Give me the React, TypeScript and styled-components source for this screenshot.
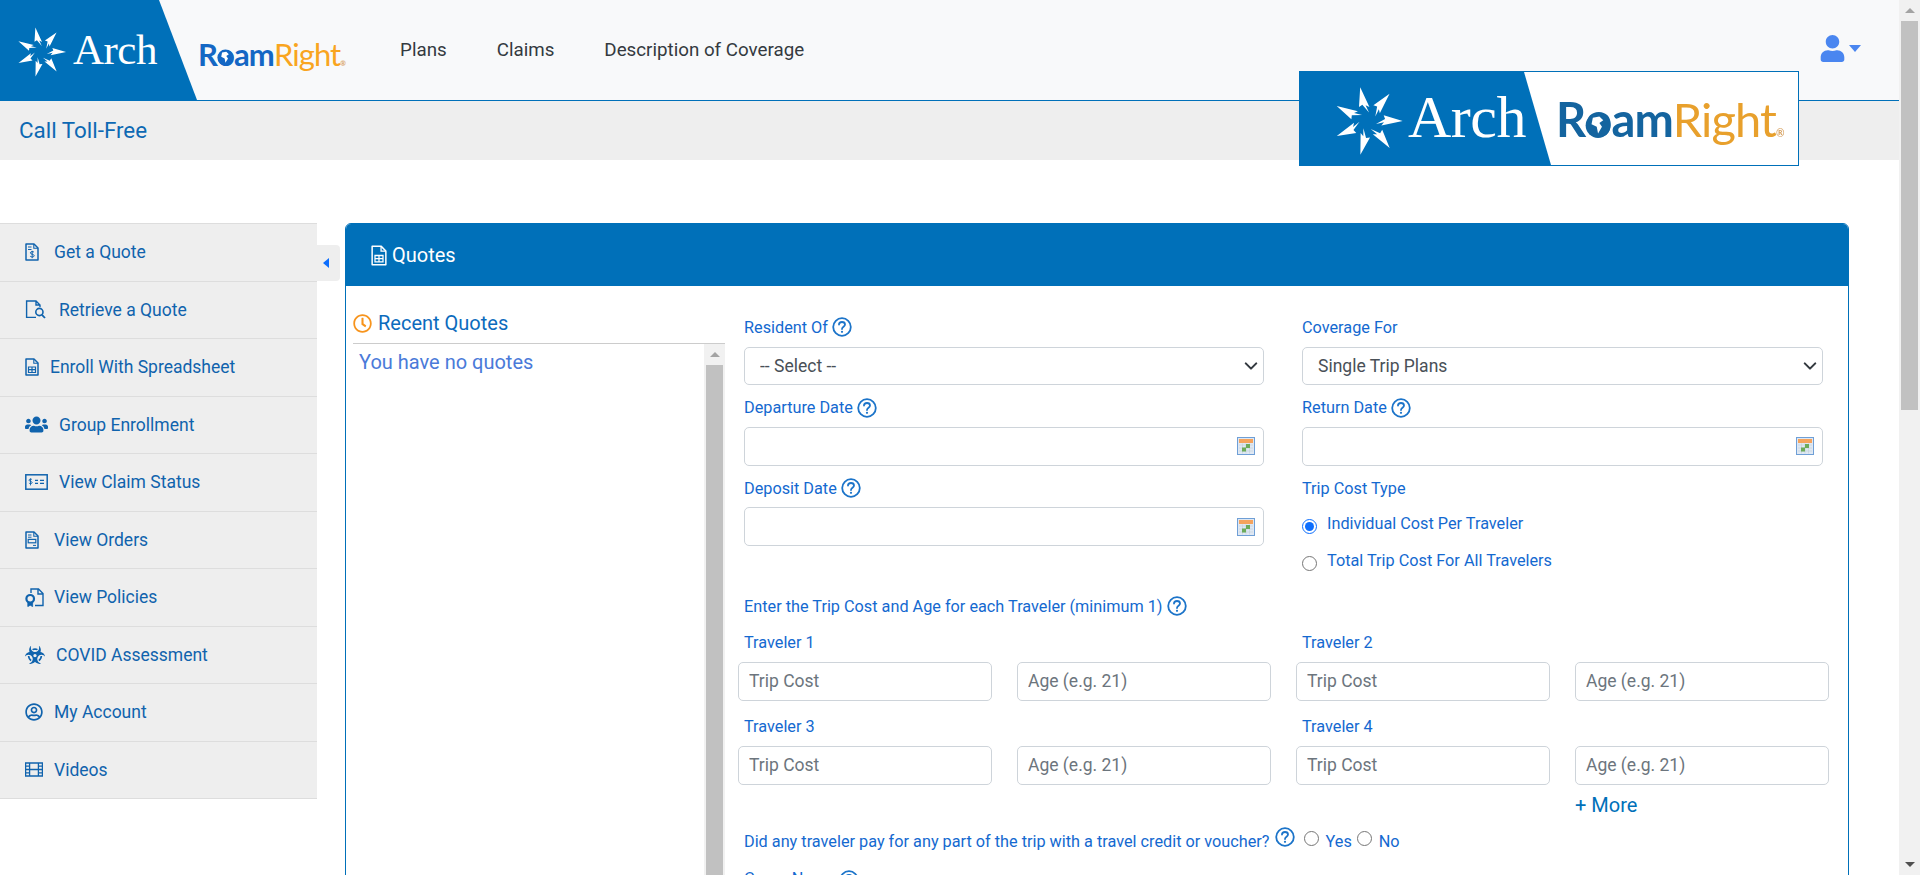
import React from "react";
import styled, { createGlobalStyle } from "styled-components";
import { FaUser, FaUsers, FaBiohazard, FaRegClock, FaRegUserCircle } from "react-icons/fa";

const BLUE = "#0070b9";
const LABEL = "#1469d0";
const SIDE_TEXT = "#1063ad";

const GlobalStyle = createGlobalStyle`
  html, body {
    margin: 0;
    height: 100%;
    overflow: hidden;
    background: #fff;
    font-family: Roboto, "Liberation Sans", sans-serif;
  }
  * {
    box-sizing: border-box;
  }
`;

const Shell = styled.div`
  display: flex;
  height: 875px;
  overflow: hidden;
`;
const Main = styled.div`
  position: relative;
  flex: 1;
  min-width: 0;
  overflow: hidden;
`;

// scrollbars
const Track = styled.div`
  display: flex;
  flex-direction: column;
  align-items: center;
  flex: none;
  width: 21px;
  background: #f1f1f1;
`;
const ArrowCell = styled.div`
  display: flex;
  align-items: center;
  justify-content: center;
  flex: none;
  width: 100%;
  height: 21px;
`;
const EndCell = styled(ArrowCell)`
  margin-top: auto;
`;
const ArrowUp = styled.div`
  width: 0;
  height: 0;
  border-left: 5px solid transparent;
  border-right: 5px solid transparent;
  border-bottom: 5px solid #a3a3a3;
`;
const ArrowDown = styled.div`
  width: 0;
  height: 0;
  border-left: 5px solid transparent;
  border-right: 5px solid transparent;
  border-top: 5px solid #505050;
`;
const Thumb = styled.div<{ $height: number }>`
  flex: none;
  width: 17px;
  height: ${({ $height }) => $height}px;
  background: #c1c1c1;
`;

// top bar
const TopBar = styled.header`
  display: flex;
  align-items: center;
  height: 101px;
  background: #f8f9fa;
  border-bottom: 1px solid ${BLUE};
`;
const BrandBlock = styled.div`
  display: flex;
  align-items: center;
  flex: none;
  width: 197px;
  height: 100px;
  padding: 4px 0 0 15px;
  gap: 6px;
  background: ${BLUE};
  clip-path: polygon(0 0, 159px 0, 197px 100%, 0 100%);
`;
const ArchWord = styled.span<{ $size: number; $lift: number }>`
  margin-top: -${({ $lift }) => $lift}px;
  font-family: "Liberation Serif", serif;
  font-size: ${({ $size }) => $size}px;
  line-height: 1;
  letter-spacing: -0.5px;
  color: #fff;
`;
const RoamWord = styled.div<{ $size: number; $dim?: boolean }>`
  flex: none;
  font-family: Lato, "Liberation Sans", sans-serif;
  font-size: ${({ $size }) => $size}px;
  line-height: 1;
  letter-spacing: -0.9px;
  color: ${({ $dim }) => ($dim ? "#14649f" : "#1467c4")};
  font-weight: 700;
`;
const RightPart = styled.span<{ $dim?: boolean }>`
  font-weight: 400;
  color: ${({ $dim }) => ($dim ? "#e8a02c" : "#f9a51f")};
`;
const GlobeLetter = styled.span`
  position: relative;
  display: inline-block;
`;
const GlobeOverlay = styled.svg`
  position: absolute;
  left: 0;
  bottom: 0.06em;
  width: 100%;
  height: 0.62em;
`;
const Mark = styled.sup`
  font-size: 0.22em;
  vertical-align: baseline;
  color: #d9a76a;
`;
const TopRoam = styled.div`
  margin: 8px 0 0 1px;
`;
const Nav = styled.nav`
  display: flex;
  gap: 50px;
  margin: 0 0 0 55px;
`;
const NavLink = styled.a`
  font-size: 18.75px;
  line-height: 24px;
  color: #343a40;
`;
const UserMenu = styled.div`
  display: flex;
  align-items: center;
  gap: 3px;
  margin: -3px 38px 0 auto;
  color: #4a86f0;
  font-size: 27px;
`;
const Caret = styled.div`
  width: 0;
  height: 0;
  border-left: 6px solid transparent;
  border-right: 6px solid transparent;
  border-top: 7px solid #4a86f0;
`;

const SubBar = styled.div`
  display: flex;
  align-items: center;
  height: 59px;
  padding: 0 0 2px 19px;
  background: #eee;
  color: #0d69b3;
  font-size: 22.4px;
`;

// pasted banner image sits over the header
const Banner = styled.div`
  position: absolute;
  top: 71px;
  left: 1299px;
  display: flex;
  align-items: center;
  width: 500px;
  height: 95px;
  background: #fff;
  border: 1px solid ${BLUE};
`;
const BannerBlue = styled.div`
  display: flex;
  align-items: center;
  flex: none;
  width: 251px;
  height: 100%;
  padding: 4px 0 0 32px;
  gap: 4px;
  background: ${BLUE};
  clip-path: polygon(0 0, 224px 0, 251px 100%, 0 100%);
  filter: blur(0.4px);
`;
const BannerRoam = styled.div`
  margin: 2px 0 0 5px;
  filter: blur(0.5px);
`;

// page body
const Content = styled.div`
  display: flex;
  align-items: flex-start;
  margin-top: 63px;
`;
const Sidebar = styled.aside`
  flex: none;
  width: 317px;
  background: #eee;
  border-top: 1px solid #ddd;
`;
const SideRow = styled.a<{ $gap: number }>`
  display: flex;
  align-items: center;
  gap: ${({ $gap }) => $gap}px;
  height: 57.5px;
  padding-left: 25px;
  border-bottom: 1px solid #ddd;
  color: ${SIDE_TEXT};
  font-size: 17.5px;
`;
const SideIcon = styled.span`
  display: flex;
  align-items: center;
  flex: none;
`;
const ToggleTab = styled.div`
  display: flex;
  align-items: center;
  flex: none;
  width: 23px;
  height: 36px;
  margin-top: 22px;
  padding-left: 6px;
  background: #eee;
  border-radius: 0 4px 4px 0;
`;
const ToggleArrow = styled.div`
  width: 0;
  height: 0;
  border-top: 5.5px solid transparent;
  border-bottom: 5.5px solid transparent;
  border-right: 6px solid #0d6efd;
`;

const Card = styled.section`
  flex: none;
  width: 1504px;
  height: 760px;
  margin-left: 5px;
  border: 1px solid ${BLUE};
  border-radius: 6px 6px 0 0;
`;
const CardHead = styled.div`
  display: flex;
  align-items: center;
  gap: 5px;
  height: 62px;
  padding-left: 25px;
  background: ${BLUE};
  border-radius: 5px 5px 0 0;
  color: #fff;
  font-size: 20px;
`;
const CardBody = styled.div`
  display: flex;
  align-items: flex-start;
`;

const RecentCol = styled.div`
  flex: none;
  width: 372px;
  margin-left: 7px;
`;
const RecentTitle = styled.h3`
  display: flex;
  align-items: center;
  gap: 6px;
  height: 35px;
  margin: 23px 0 0;
  padding-bottom: 6px;
  border-bottom: 1px solid #ccc;
  color: #0c6bbd;
  font-size: 20px;
  font-weight: 400;
`;
const ClockIcon = styled.span`
  display: flex;
  color: #f7941d;
  font-size: 19px;
`;
const RecentBox = styled.div`
  display: flex;
  height: 540px;
`;
const RecentText = styled.div`
  flex: 1;
  padding: 6px 0 0 6px;
  color: #4a7ad9;
  font-size: 20px;
  line-height: 24px;
`;

const Form = styled.form`
  flex: none;
  width: 1091px;
  margin-left: 13px;
  padding-top: 31px;
`;
const TopGrid = styled.div`
  display: grid;
  grid-template-columns: 520px 521px;
  column-gap: 38px;
  row-gap: 12.5px;
  margin-left: 6px;
`;
const Field = styled.div`
  display: flex;
  flex-direction: column;
  gap: 9px;
`;
const FirstField = styled(Field)`
  gap: 10px;
`;
const Label = styled.label`
  display: flex;
  align-items: center;
  gap: 4px;
  height: 20px;
  color: ${LABEL};
  font-size: 16.25px;
`;
const Select = styled.select`
  width: 100%;
  height: 38px;
  padding: 0 30px 0 15px;
  border: 1px solid #ced4da;
  border-radius: 5px;
  appearance: none;
  background: #fff url("data:image/svg+xml,%3csvg xmlns='http://www.w3.org/2000/svg' viewBox='0 0 16 16'%3e%3cpath fill='none' stroke='%23343a40' stroke-linecap='round' stroke-linejoin='round' stroke-width='2.4' d='M2 5l6 6 6-6'/%3e%3c/svg%3e") no-repeat right 5px center / 14px 14px;
  color: #495057;
  font-family: inherit;
  font-size: 17.5px;
`;
const DateBox = styled.div`
  display: flex;
  align-items: center;
  height: 39px;
  padding-right: 8px;
  border: 1px solid #ced4da;
  border-radius: 5px;
  background: #fff;
`;
const DateInput = styled.input`
  flex: 1;
  min-width: 0;
  height: 100%;
  border: 0;
  outline: 0;
  background: transparent;
`;
const RadioStack = styled.div`
  display: flex;
  flex-direction: column;
  gap: 17px;
  padding-top: 6.5px;
`;
const RadioRow = styled.label`
  display: flex;
  align-items: center;
  gap: 10px;
  height: 20px;
  color: ${LABEL};
  font-size: 16.25px;
`;
const Radio = styled.input.attrs({ type: "radio" })`
  flex: none;
  width: 15px;
  height: 15px;
  margin: 5px 0 0;
  accent-color: #0d6efd;
`;

const TravelerIntro = styled(Label)`
  margin: 25.5px 0 16px 6px;
`;
const TravelerGrid = styled.div`
  display: grid;
  grid-template-columns: repeat(4, 254px);
  column-gap: 25px;
`;
const TravelerCell = styled.div`
  grid-column: span 2;
  display: grid;
  grid-template-columns: 254px 254px;
  column-gap: 25px;
  margin-bottom: 15.5px;
`;
const TravelerLabel = styled(Label)`
  grid-column: span 2;
  margin: 0 0 10px 6px;
`;
const TextInput = styled.input`
  width: 100%;
  height: 38.5px;
  padding: 0 10px;
  border: 1px solid #ced4da;
  border-radius: 5px;
  outline: 0;
  color: #495057;
  font-family: inherit;
  font-size: 17.5px;
  &::placeholder {
    color: #6c757d;
    opacity: 1;
  }
`;
const MoreLink = styled.a`
  grid-column: 4;
  margin-top: -7px;
  color: ${BLUE};
  font-size: 20px;
  line-height: 24px;
`;
const VoucherRow = styled.div`
  display: flex;
  align-items: center;
  height: 20px;
  margin: 14px 0 19px 6px;
  color: ${LABEL};
  font-size: 16.25px;
`;
const VoucherHelp = styled.span`
  display: flex;
  margin: -8px 9px 0 5px;
`;
const VoucherOption = styled.label`
  display: flex;
  align-items: center;
  gap: 5px;
  margin-right: 5px;
`;
const VoucherRadio = styled(Radio)`
  margin: -5px 2px 0 0;
`;
const GroupLabel = styled(Label)`
  align-items: flex-start;
  margin-left: 6px;
  line-height: 17px;
`;

// drawings
const HelpIcon = () => (
  <svg width="20" height="20" viewBox="0 0 20 20" fill="none">
    <circle cx="10" cy="10" r="8.8" stroke="#1c74c9" strokeWidth="1.8" />
    <path d="M7 7.6C7 5.9 8.4 5 10 5c1.7 0 3 1 3 2.5 0 2.3-3 2.3-3 4.6" stroke="#1c74c9" strokeWidth="1.8" strokeLinecap="round" />
    <circle cx="10" cy="14.8" r="1.1" fill="#1c74c9" />
  </svg>
);

const CalendarIcon = () => (
  <svg width="18" height="18" viewBox="0 0 18 18">
    <rect x="0.5" y="0.5" width="17" height="17" fill="#dfe8f3" stroke="#6f9fd6" />
    <rect x="2" y="2" width="14" height="4" fill="#f5a35c" />
    <path d="M2 8h14M2 11h14M2 14h14M5.5 6.5v10M9 6.5v10M12.5 6.5v10" stroke="#c3ccd6" strokeWidth="0.6" />
    <rect x="9" y="7" width="4" height="4" fill="#6cab5a" />
    <rect x="5" y="10.5" width="4" height="4" fill="#6cab5a" />
  </svg>
);

const BLADE = "M0 -26 L3.4 -10 L0.9 -12 L2.2 -6 L-1.4 -12.8 L-4.2 -11.8 Z";

const Star = ({ size }: { size: number }) => (
  <svg width={size} height={size} viewBox="-27 -27 54 54" fill="#fff" style={{ flex: "none" }}>
    {[0, 1, 2, 3, 4, 5, 6].map((i) => (
      <path key={i} d={BLADE} transform={`rotate(${-13 + (i * 360) / 7})`} />
    ))}
  </svg>
);

const Roam = ({ size, dim }: { size: number; dim?: boolean }) => (
  <RoamWord $size={size} $dim={dim}>
    R
    <GlobeLetter>
      o
      <GlobeOverlay viewBox="0 0 20 20">
        <circle cx="10" cy="10" r="9.5" fill={dim ? "#14649f" : "#1467c4"} />
        <path d="M6 4l5-1 3 3-3 2 2 3-3 5-1-5-4-2z" fill="#fff" />
      </GlobeOverlay>
    </GlobeLetter>
    am<RightPart $dim={dim}>Right</RightPart>
    <Mark>®</Mark>
  </RoamWord>
);

const DocOutline = ({ children }: { children?: React.ReactNode }) => (
  <svg width="14" height="18" viewBox="0 0 14 18" fill="none" stroke="currentColor">
    <path d="M1 1h8l4 4v12H1z" strokeWidth="1.5" strokeLinejoin="round" />
    <path d="M8.8 1v4.2H13" strokeWidth="1.1" />
    {children}
  </svg>
);

const QuoteIcon = () => (
  <DocOutline>
    <path d="M3 4h3.5M3 6.5h3.5" strokeWidth="1" />
    <path d="M9 9.2c-.5-.8-3.6-1-3.6.7 0 1.7 3.8 1 3.8 2.8 0 1.7-3.3 1.5-4 .5M7.2 7.8v7.4" strokeWidth="1" />
  </DocOutline>
);
const RetrieveIcon = () => (
  <svg width="21" height="19" viewBox="0 0 21 19" fill="none" stroke="currentColor">
    <path d="M15 7V5l-4-4H1.6v16.4H11M11 1v4h4" strokeWidth="1.4" />
    <circle cx="14.4" cy="12" r="3.6" strokeWidth="1.6" />
    <path d="M17 14.8l3 3.2" strokeWidth="1.8" />
  </svg>
);
const SheetIcon = () => (
  <DocOutline>
    <path d="M3.5 9h7v5.5h-7zM3.5 11.7h7M7 9v5.5" strokeWidth="1.2" />
  </DocOutline>
);
const ClaimIcon = () => (
  <svg width="23" height="16" viewBox="0 0 23 16" fill="none" stroke="currentColor">
    <rect x="0.8" y="0.8" width="21.4" height="14.4" strokeWidth="1.5" />
    <path d="M7 5.6c-.5-.7-3-.8-3 .6 0 1.5 3.2.9 3.2 2.4 0 1.3-2.7 1.2-3.3.4M5.5 4.4v7" strokeWidth="0.9" />
    <path d="M10 6.4h3M15 6.4h4M10 9.4h3M15 9.4h4" strokeWidth="1.3" />
  </svg>
);
const OrdersIcon = () => (
  <DocOutline>
    <path d="M3 4h3.5M3 6.2h3.5" strokeWidth="1" />
    <rect x="3.2" y="8.4" width="7.6" height="3.4" strokeWidth="1.2" />
    <path d="M8 14.4h3" strokeWidth="1" />
  </DocOutline>
);
const PolicyIcon = () => (
  <svg width="19" height="19" viewBox="0 0 19 19" fill="none" stroke="currentColor">
    <path d="M6 5V1h7.5L18 5.5V17.5H10M13 1v5h5" strokeWidth="1.4" />
    <circle cx="5.2" cy="10.8" r="3.8" strokeWidth="2.2" />
    <path d="M2.8 14v4.6l2.4-1.4 2.4 1.4V14" fill="currentColor" strokeWidth="0.8" />
  </svg>
);
const FilmIcon = () => (
  <svg width="18" height="15" viewBox="0 0 18 15" fill="none" stroke="currentColor">
    <path d="M.6 1h16.8v13H.6zM4.6 1v13M13.4 1v13M4.6 7.5h8.8M.6 4.2h4M.6 7.5h4M.6 10.8h4M13.4 4.2h4M13.4 7.5h4M13.4 10.8h4" strokeWidth="1.3" />
  </svg>
);
const QuotesHeadIcon = () => (
  <svg width="16" height="21" viewBox="0 0 14 18" fill="none" stroke="#fff">
    <path d="M1 1h8l4 4v12H1z" strokeWidth="1.3" strokeLinejoin="round" />
    <path d="M8.8 1v4.2H13" strokeWidth="1.1" />
    <path d="M3.5 9h7v5.5h-7zM3.5 11.7h7M7 9v5.5" strokeWidth="1.1" />
  </svg>
);

const NAV = ["Plans", "Claims", "Description of Coverage"];

const SIDE_ITEMS = [
  { label: "Get a Quote", icon: <QuoteIcon />, gap: 15 },
  { label: "Retrieve a Quote", icon: <RetrieveIcon />, gap: 13 },
  { label: "Enroll With Spreadsheet", icon: <SheetIcon />, gap: 11 },
  { label: "Group Enrollment", icon: <FaUsers size={23} />, gap: 11 },
  { label: "View Claim Status", icon: <ClaimIcon />, gap: 11 },
  { label: "View Orders", icon: <OrdersIcon />, gap: 15 },
  { label: "View Policies", icon: <PolicyIcon />, gap: 10 },
  { label: "COVID Assessment", icon: <FaBiohazard size={20} />, gap: 11 },
  { label: "My Account", icon: <FaRegUserCircle size={18} />, gap: 11 },
  { label: "Videos", icon: <FilmIcon />, gap: 11 },
];

const DateField = ({ label }: { label: string }) => (
  <Field>
    <Label>
      {label} <HelpIcon />
    </Label>
    <DateBox>
      <DateInput />
      <CalendarIcon />
    </DateBox>
  </Field>
);

const Traveler = ({ n }: { n: number }) => (
  <TravelerCell>
    <TravelerLabel>Traveler {n}</TravelerLabel>
    <TextInput placeholder="Trip Cost" />
    <TextInput placeholder="Age (e.g. 21)" />
  </TravelerCell>
);

const App = () => {
  return (
    <Shell>
      <GlobalStyle />
      <Main>
        <TopBar>
          <BrandBlock>
            <Star size={52} />
            <ArchWord $size={43} $lift={5}>
              Arch
            </ArchWord>
          </BrandBlock>
          <TopRoam>
            <Roam size={31} />
          </TopRoam>
          <Nav>
            {NAV.map((item) => (
              <NavLink key={item}>{item}</NavLink>
            ))}
          </Nav>
          <UserMenu>
            <FaUser />
            <Caret />
          </UserMenu>
        </TopBar>
        <SubBar>Call Toll-Free</SubBar>
        <Banner>
          <BannerBlue>
            <Star size={72} />
            <ArchWord $size={60} $lift={8}>
              Arch
            </ArchWord>
          </BannerBlue>
          <BannerRoam>
            <Roam size={47} dim />
          </BannerRoam>
        </Banner>
        <Content>
          <Sidebar>
            {SIDE_ITEMS.map((item) => (
              <SideRow key={item.label} $gap={item.gap}>
                <SideIcon>{item.icon}</SideIcon>
                {item.label}
              </SideRow>
            ))}
          </Sidebar>
          <ToggleTab>
            <ToggleArrow />
          </ToggleTab>
          <Card>
            <CardHead>
              <QuotesHeadIcon />
              Quotes
            </CardHead>
            <CardBody>
              <RecentCol>
                <RecentTitle>
                  <ClockIcon>
                    <FaRegClock />
                  </ClockIcon>
                  Recent Quotes
                </RecentTitle>
                <RecentBox>
                  <RecentText>You have no quotes</RecentText>
                  <Track>
                    <ArrowCell>
                      <ArrowUp />
                    </ArrowCell>
                    <Thumb $height={520} />
                  </Track>
                </RecentBox>
              </RecentCol>
              <Form>
                <TopGrid>
                  <FirstField>
                    <Label>
                      Resident Of <HelpIcon />
                    </Label>
                    <Select defaultValue="">
                      <option value="">-- Select --</option>
                    </Select>
                  </FirstField>
                  <FirstField>
                    <Label>Coverage For</Label>
                    <Select defaultValue="single">
                      <option value="single">Single Trip Plans</option>
                    </Select>
                  </FirstField>
                  <DateField label="Departure Date" />
                  <DateField label="Return Date" />
                  <DateField label="Deposit Date" />
                  <Field>
                    <Label>Trip Cost Type</Label>
                    <RadioStack>
                      <RadioRow>
                        <Radio name="costType" defaultChecked />
                        Individual Cost Per Traveler
                      </RadioRow>
                      <RadioRow>
                        <Radio name="costType" />
                        Total Trip Cost For All Travelers
                      </RadioRow>
                    </RadioStack>
                  </Field>
                </TopGrid>
                <TravelerIntro>
                  Enter the Trip Cost and Age for each Traveler (minimum 1) <HelpIcon />
                </TravelerIntro>
                <TravelerGrid>
                  <Traveler n={1} />
                  <Traveler n={2} />
                  <Traveler n={3} />
                  <Traveler n={4} />
                  <MoreLink>+ More</MoreLink>
                </TravelerGrid>
                <VoucherRow>
                  Did any traveler pay for any part of the trip with a travel credit or voucher?
                  <VoucherHelp>
                    <HelpIcon />
                  </VoucherHelp>
                  <VoucherOption>
                    <VoucherRadio name="voucher" />
                    Yes
                  </VoucherOption>
                  <VoucherOption>
                    <VoucherRadio name="voucher" />
                    No
                  </VoucherOption>
                </VoucherRow>
                <GroupLabel>
                  Group Name <HelpIcon />
                </GroupLabel>
              </Form>
            </CardBody>
          </Card>
        </Content>
      </Main>
      <Track>
        <ArrowCell>
          <ArrowUp />
        </ArrowCell>
        <Thumb $height={389} />
        <EndCell>
          <ArrowDown />
        </EndCell>
      </Track>
    </Shell>
  );
};

export default App;
